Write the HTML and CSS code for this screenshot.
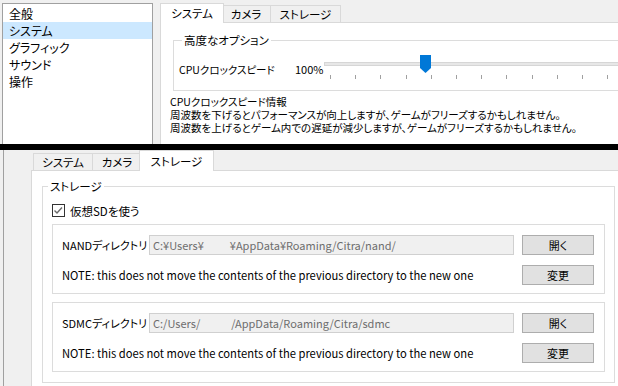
FILE: index.html
```html
<!DOCTYPE html>
<html lang="ja">

<head>
  <meta charset="UTF-8">
  <meta name="viewport" content="width=device-width, initial-scale=1.0">
  <title>設定</title>
  <link rel="stylesheet" href="styles.css">
</head>

<body>
  <section class="shot shot-top">
    <ul class="category-list">
      <li>全般</li>
      <li class="selected">システム</li>
      <li>グラフィック</li>
      <li>サウンド</li>
      <li>操作</li>
    </ul>
    <div class="tabs">
      <div class="tab-bar">
        <div class="tab tab-system active">システム</div>
        <div class="tab tab-camera">カメラ</div>
        <div class="tab tab-storage">ストレージ</div>
      </div>
      <div class="tab-pane">
        <fieldset class="group group-advanced">
          <legend>高度なオプション</legend>
          <div class="clock-row">
            <span class="clock-label">CPUクロックスピード</span>
            <span class="clock-value">100%</span>
            <div class="slider">
              <div class="groove"></div>
              <svg class="thumb" width="11" height="18" viewBox="0 0 11 18">
                <polygon points="0,0 11,0 11,13 5.5,18 0,13" fill="#0078d7" />
              </svg>
              <div class="ticks">
                <span></span><span></span><span></span><span></span>
                <span></span><span></span><span></span><span></span>
                <span></span><span></span><span></span><span></span>
              </div>
            </div>
          </div>
        </fieldset>
        <p class="info">
          CPUクロックスピード情報<br>
          周波数を下げるとパフォーマンスが向上しますが、ゲームがフリーズするかもしれません。<br>
          周波数を上げるとゲーム内での遅延が減少しますが、ゲームがフリーズするかもしれません。
        </p>
      </div>
    </div>
  </section>

  <div class="divider"></div>

  <section class="shot shot-bottom">
    <div class="list-edge"></div>
    <div class="tabs">
      <div class="tab-bar">
        <div class="tab tab-system">システム</div>
        <div class="tab tab-camera">カメラ</div>
        <div class="tab tab-storage active">ストレージ</div>
      </div>
      <div class="tab-pane">
        <fieldset class="group group-storage">
          <legend>ストレージ</legend>
          <label class="check">
            <svg width="13" height="13" viewBox="0 0 13 13">
              <rect x="0.5" y="0.5" width="12" height="12" fill="#fff" stroke="#333" />
              <polyline points="2.5,6.5 5,9 10,3.5" fill="none" stroke="#6a6a6a" stroke-width="1.4" />
            </svg>
            仮想SDを使う
          </label>

          <div class="dir-box">
            <div class="dir-row">
              <span class="dir-label">NANDディレクトリ</span>
              <div class="path">C:¥Users¥<span class="blank"></span>¥AppData¥Roaming/Citra/nand/</div>
              <button class="btn">開く</button>
            </div>
            <div class="dir-row">
              <span class="note">NOTE: this does not move the contents of the previous directory to the new one</span>
              <button class="btn">変更</button>
            </div>
          </div>

          <div class="dir-box">
            <div class="dir-row">
              <span class="dir-label">SDMCディレクトリ</span>
              <div class="path">C:/Users/<span class="blank wide"></span>/AppData/Roaming/Citra/sdmc</div>
              <button class="btn">開く</button>
            </div>
            <div class="dir-row">
              <span class="note">NOTE: this does not move the contents of the previous directory to the new one</span>
              <button class="btn">変更</button>
            </div>
          </div>
        </fieldset>
      </div>
    </div>
  </section>
</body>

</html>
```

FILE: styles.css
```css
*,
*::before,
*::after {
  box-sizing: border-box;
}

:root {
  --face: #f0f0f0;
  --line: #dcdcdc;
  --tab-line: #d9d9d9;
  --list-line: #a0a0a0;
  --select: #cce8ff;
  --accent: #0078d7;
}

html,
body {
  margin: 0;
  padding: 0;
  background: var(--face);
  color: #000;
  font-family: 'Noto Sans CJK JP', 'Noto Sans', sans-serif;
  font-size: 11px;
  font-feature-settings: "palt";
}

.shot {
  display: flex;
  align-items: flex-start;
  overflow: hidden;
  background: var(--face);
}

.shot-top {
  height: 144px;
  padding-top: 3px;
}

.shot-bottom {
  height: 236px;
}

.divider {
  height: 6px;
  background: #000;
}

/* left category list */
.category-list {
  flex: none;
  width: 151px;
  height: 160px;
  margin: 0 0 0 2px;
  padding: 1px 0 0;
  list-style: none;
  background: #fff;
  border: 1px solid var(--list-line);
  font-size: 12px;
}

.category-list li {
  height: 17px;
  line-height: 17px;
  padding-left: 6px;
}

.category-list li.selected {
  background: var(--select);
}

.list-edge {
  flex: none;
  align-self: stretch;
  width: 4px;
  border-right: 1px solid var(--list-line);
}

/* tab widget */
.tabs {
  flex: none;
  display: flex;
  flex-direction: column;
  height: 300px;
}

.shot-top .tabs {
  width: 520px;
  margin-left: 7px;
}

.shot-bottom .tabs {
  width: 640px;
  margin-left: 27px;
}

.tab-bar {
  display: flex;
  align-items: flex-end;
  height: 19px;
  padding-left: 2px;
}

.shot-bottom .tab-bar {
  height: 20px;
}

.tab {
  box-sizing: content-box;
  height: 16px;
  line-height: 16px;
  margin-right: -1px;
  border: 1px solid var(--tab-line);
  border-bottom: none;
  background: var(--face);
  text-align: center;
  font-size: 11.5px;
}

.tab-system {
  width: 58px;
}

.tab-camera {
  width: 48px;
}

.tab-storage {
  width: 69px;
}

.tab.active {
  position: relative;
  z-index: 1;
  height: 19px;
  line-height: 19px;
  margin: 0 -3px -1px -2px;
  padding: 0 2px;
  background: #fff;
}

.shot-bottom .tab.active {
  height: 20px;
  line-height: 21px;
}

.tab-pane {
  flex: 1;
  background: #fff;
  border: 1px solid var(--tab-line);
}

/* group boxes */
.group {
  min-width: 0;
  margin: 0;
  padding: 0;
  border: 1px solid var(--line);
}

.group legend {
  padding: 0 2px;
  line-height: 15px;
  font-size: 11.5px;
}

.group-advanced {
  margin: 10px 0 0 12px;
  padding: 7px 0 11px 5px;
}

.group-advanced legend {
  margin-left: 3px;
}

.group-storage {
  width: 573px;
  margin: 8px 0 0 10px;
  padding: 9px 0 10px;
}

.group-storage legend {
  margin-left: 5px;
}

/* cpu clock slider */
.clock-row {
  display: flex;
  align-items: flex-start;
}

.clock-label,
.clock-value {
  margin-top: 7px;
  line-height: 15px;
  white-space: nowrap;
}

.clock-label {
  width: 116px;
  font-size: 10.5px;
}

.clock-value {
  width: 29px;
}

.slider {
  position: relative;
  flex: 1;
  height: 24px;
}

.groove {
  height: 4px;
  margin-top: 7px;
  border: 1px solid #d6d6d6;
  background: #e7e7e7;
}

.thumb {
  position: absolute;
  top: 0;
  left: 96px;
}

.ticks {
  display: flex;
  gap: 24.2px;
  margin-top: 9px;
  padding-left: 6px;
}

.ticks span {
  width: 1px;
  height: 4px;
  background: #a0a0a0;
}

.info {
  margin: 4px 0 0 9px;
  font-size: 10.5px;
  line-height: 13px;
  white-space: nowrap;
}

/* storage page */
.check {
  display: flex;
  align-items: center;
  gap: 5px;
  height: 15px;
  margin-left: 9px;
  font-size: 11.5px;
}

.dir-box {
  margin: 6px 9px 0;
  padding: 10px 10px 8px 9px;
  border: 1px solid var(--line);
}

.dir-box + .dir-box {
  margin-top: 8px;
}

.dir-row {
  display: flex;
  align-items: center;
  height: 20px;
}

.dir-row + .dir-row {
  margin-top: 10px;
}

.dir-label {
  width: 87px;
  white-space: nowrap;
}

.path {
  width: 365px;
  height: 20px;
  padding-left: 3px;
  line-height: 18px;
  border: 1px solid #d0d0d0;
  background: var(--face);
  color: #6d6d6d;
  white-space: nowrap;
  overflow: hidden;
}

.blank {
  display: inline-block;
  width: 26px;
}

.blank.wide {
  width: 31px;
}

.note {
  flex: 1;
  font-size: 11.2px;
  white-space: nowrap;
}

.btn {
  width: 72px;
  height: 20px;
  margin-left: auto;
  padding: 0;
  border: 1px solid #adadad;
  background: #e1e1e1;
  color: #000;
  font: inherit;
  line-height: 18px;
}
```
